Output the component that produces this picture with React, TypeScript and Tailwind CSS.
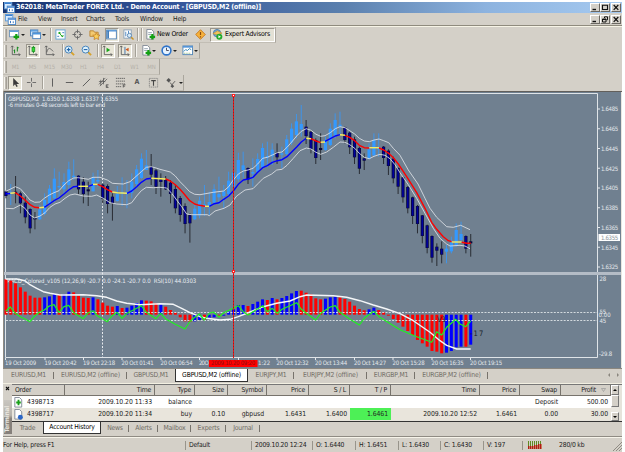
import React from "react";

type Candle = [up: number, high: number, top: number, bottom: number, low: number];
type Point = [number, number];

const UP = 1;
const DN = 0;

// Chart series are stored in thirds of a pixel, measured from the pane's top
const CANDLES: Candle[] = [
  [DN, 302, 304, 318, 325], [UP, 282, 307, 312, 345], [DN, 258, 305, 311, 340], [DN, 305, 310, 340, 370],
  [DN, 320, 338, 382, 400], [DN, 355, 357, 415, 430], [DN, 366, 384, 388, 418], [UP, 345, 358, 388, 390],
  [UP, 310, 330, 372, 376], [UP, 285, 296, 340, 345], [UP, 235, 266, 325, 335], [UP, 245, 288, 292, 330],
  [UP, 250, 276, 298, 310], [UP, 215, 238, 285, 300], [UP, 208, 257, 262, 270], [DN, 256, 257, 298, 312],
  [DN, 262, 275, 312, 340], [DN, 275, 298, 304, 348], [UP, 248, 262, 304, 304], [UP, 240, 270, 275, 290],
  [DN, 280, 284, 326, 340], [DN, 283, 288, 342, 370], [DN, 310, 320, 340, 392], [UP, 288, 312, 333, 335],
  [UP, 262, 306, 310, 348], [UP, 270, 308, 312, 355], [UP, 250, 275, 308, 325], [UP, 225, 238, 282, 295],
  [UP, 190, 206, 264, 266], [UP, 180, 226, 240, 240], [DN, 192, 230, 254, 285], [DN, 236, 241, 290, 312],
  [DN, 250, 268, 276, 320], [DN, 258, 270, 298, 300], [DN, 270, 278, 312, 340], [DN, 285, 297, 355, 370],
  [DN, 318, 324, 375, 395], [DN, 340, 348, 402, 430], [DN, 370, 375, 400, 458], [UP, 345, 356, 388, 390],
  [UP, 320, 332, 376, 385], [UP, 285, 343, 348, 378], [UP, 305, 336, 348, 375], [UP, 283, 298, 338, 340],
  [UP, 260, 312, 322, 345], [UP, 285, 304, 318, 355], [UP, 245, 272, 312, 320], [UP, 230, 248, 290, 300],
  [UP, 188, 210, 268, 275], [UP, 185, 226, 240, 265], [DN, 232, 234, 268, 282], [UP, 205, 246, 251, 290],
  [UP, 190, 207, 246, 250], [UP, 160, 174, 232, 235], [UP, 155, 198, 203, 232], [UP, 160, 179, 199, 225],
  [DN, 160, 188, 202, 222], [UP, 170, 190, 194, 235], [UP, 135, 148, 192, 195], [UP, 100, 116, 158, 165],
  [UP, 72, 94, 135, 145], [UP, 45, 102, 118, 140], [DN, 90, 110, 138, 162], [DN, 120, 125, 178, 190],
  [DN, 145, 150, 204, 222], [DN, 130, 174, 180, 210], [UP, 140, 150, 180, 182], [UP, 100, 116, 165, 168],
  [UP, 70, 90, 136, 145], [UP, 65, 104, 110, 135], [DN, 110, 112, 150, 160], [DN, 125, 128, 172, 192],
  [DN, 140, 148, 202, 222], [DN, 170, 174, 236, 252], [DN, 190, 205, 212, 240], [UP, 160, 178, 206, 208],
  [UP, 130, 150, 196, 200], [UP, 130, 172, 178, 200], [DN, 168, 170, 204, 222], [DN, 178, 182, 228, 255],
  [DN, 200, 206, 265, 280], [DN, 232, 234, 290, 312], [DN, 260, 262, 322, 338], [DN, 288, 291, 355, 370],
  [DN, 320, 322, 378, 402], [DN, 345, 348, 402, 430], [DN, 375, 376, 438, 460], [DN, 404, 406, 474, 490],
  [DN, 436, 438, 503, 518], [DN, 460, 470, 482, 528], [DN, 454, 476, 494, 520], [UP, 465, 476, 485, 520],
  [UP, 440, 458, 484, 490], [UP, 400, 420, 466, 470], [UP, 395, 432, 450, 455], [DN, 436, 438, 476, 490],
  [DN, 432, 454, 460, 500],
];

const MA: { color: string; pts: Point[] }[] = [
  { color: "#0000ff", pts: [[17, 311], [31, 311]] },
  { color: "#f5ec60", pts: [[31, 310], [46, 308]] },
  { color: "#ff0000", pts: [[46, 308], [61, 318], [75, 330], [90, 344], [104, 352], [118, 353]] },
  { color: "#f5ec60", pts: [[118, 353], [133, 352]] },
  { color: "#0000ff", pts: [[133, 352], [148, 342], [162, 332], [177, 324], [192, 312], [206, 300], [221, 290], [235, 289]] },
  { color: "#f5ec60", pts: [[235, 289], [265, 289]] },
  { color: "#0000ff", pts: [[265, 289], [279, 284]] },
  { color: "#f5ec60", pts: [[279, 283], [293, 283]] },
  { color: "#ff0000", pts: [[293, 283], [308, 290], [322, 299], [337, 306]] },
  { color: "#f5ec60", pts: [[337, 306], [352, 308], [381, 310]] },
  { color: "#0000ff", pts: [[381, 310], [395, 303], [410, 290], [424, 277], [439, 267], [454, 265]] },
  { color: "#f5ec60", pts: [[454, 265], [497, 267]] },
  { color: "#ff0000", pts: [[497, 267], [511, 273], [526, 284], [540, 298], [555, 315], [569, 332], [584, 342], [598, 346], [615, 349]] },
  { color: "#f5ec60", pts: [[615, 349], [628, 349]] },
  { color: "#0000ff", pts: [[628, 349], [643, 341], [657, 338], [671, 328], [686, 318], [700, 303], [715, 283], [730, 270], [744, 267], [759, 262], [773, 247], [788, 233], [802, 227], [817, 217], [832, 212], [846, 209], [861, 200], [875, 186], [890, 171], [904, 156], [919, 145]] },
  { color: "#f5ec60", pts: [[919, 145], [933, 146]] },
  { color: "#ff0000", pts: [[933, 146], [948, 153], [962, 158]] },
  { color: "#f5ec60", pts: [[962, 157], [975, 156]] },
  { color: "#0000ff", pts: [[975, 154], [991, 146], [1006, 138], [1020, 134]] },
  { color: "#f5ec60", pts: [[1020, 134], [1035, 136]] },
  { color: "#ff0000", pts: [[1035, 136], [1049, 142], [1064, 152], [1078, 166], [1093, 173], [1108, 174]] },
  { color: "#f5ec60", pts: [[1108, 173], [1137, 173]] },
  { color: "#ff0000", pts: [[1137, 174], [1151, 180], [1166, 190], [1180, 203], [1195, 222], [1220, 260], [1250, 308], [1275, 355], [1295, 397], [1310, 418], [1330, 440], [1345, 452], [1355, 455]] },
  { color: "#f5ec60", pts: [[1355, 456], [1385, 456]] },
  { color: "#ff0000", pts: [[1385, 457], [1400, 460], [1412, 460]] },
];

const UPPER_BAND: Point[] = [
  [17, 304], [30, 298], [46, 290], [61, 296], [75, 312], [90, 330], [104, 337], [120, 336], [133, 325], [148, 315],
  [162, 308], [177, 302], [192, 285], [206, 272], [221, 264], [235, 263], [265, 268], [279, 262], [300, 262], [322, 270],
  [337, 280], [370, 282], [390, 275], [405, 262], [424, 245], [439, 232], [454, 230], [468, 234], [480, 238], [511, 246],
  [526, 258], [540, 275], [555, 290], [569, 305], [584, 313], [600, 314], [640, 307], [671, 303], [686, 290], [700, 270],
  [715, 252], [730, 243], [744, 240], [759, 235], [773, 222], [788, 205], [802, 202], [817, 195], [832, 188], [846, 186],
  [861, 172], [875, 156], [890, 138], [904, 124], [919, 116], [933, 121], [948, 133], [962, 139], [975, 137], [991, 128],
  [1006, 116], [1020, 110], [1035, 113], [1049, 122], [1064, 132], [1078, 145], [1093, 153], [1108, 155], [1122, 150],
  [1137, 147], [1151, 152], [1166, 158], [1180, 175], [1200, 196], [1225, 240], [1254, 282], [1275, 325], [1290, 355],
  [1310, 382], [1340, 410], [1360, 412], [1382, 406], [1410, 419],
];

const LOWER_BAND: Point[] = [
  [17, 355], [40, 356], [61, 345], [75, 355], [90, 375], [104, 384], [120, 378], [135, 368], [150, 352], [165, 342],
  [180, 337], [195, 325], [210, 315], [225, 312], [250, 318], [275, 319], [290, 315], [310, 325], [330, 338], [350, 342],
  [380, 344], [395, 338], [410, 318], [424, 302], [439, 292], [460, 293], [480, 292], [500, 294], [515, 310], [530, 330],
  [545, 350], [560, 372], [575, 374], [622, 374], [628, 377], [645, 363], [672, 355], [690, 345], [710, 318], [735, 300],
  [759, 296], [775, 280], [790, 265], [815, 252], [830, 240], [846, 238], [861, 226], [880, 205], [900, 182], [919, 174],
  [933, 177], [948, 187], [962, 193], [980, 186], [1000, 172], [1020, 156], [1035, 157], [1049, 164], [1064, 175],
  [1078, 190], [1093, 202], [1108, 206], [1122, 199], [1140, 193], [1155, 196], [1170, 206], [1185, 224], [1200, 248],
  [1225, 284], [1250, 325], [1275, 370], [1300, 415], [1320, 445], [1340, 462], [1350, 468], [1380, 466], [1395, 468], [1410, 476],
];

const MACD = [
  28, 32, 40, 52, 65, 77, 83, 83, 82, 79, 72, 73, 72, 65, 67, 77, 83, 84, 82, 88, 98, 107, 110, 108, 114, 113, 107, 99, 91, 92,
  94, 99, 103, 110, 120, 128, 142, 154, 156, 154, 150, 150, 143, 142, 137, 137, 125, 118, 105, 105, 108, 102, 95, 88, 90, 84,
  88, 84, 78, 70, 63, 62, 68, 73, 85, 88, 86, 82, 80, 82, 87, 95, 107, 117, 121, 118, 113, 120, 127, 137, 147, 158, 170, 183,
  195, 210, 220, 230, 243, 245, 250, 248, 243, 232, 230, 230, 224,
];
// one letter per histogram bar
const MACD_COLORS =
  "rrrrrrrrbbbrbbrrrrbrrrrbrbbbbrrrbrrrrrrbbrbbrbbbbbrbbbrbrbbbbrrrrrbbbrrrrrrbbrrrrrrrrrrrrrrbbbbrb";

const SIGNAL: Point[] = [
  [17, 27], [50, 27], [75, 32], [90, 44], [110, 55], [130, 65], [150, 70], [180, 75], [250, 74], [290, 77], [320, 82],
  [350, 93], [380, 100], [420, 104], [480, 101], [520, 103], [545, 115], [570, 128], [600, 140], [620, 145], [660, 150],
  [690, 148], [715, 140], [750, 126], [790, 110], [830, 100], [870, 93], [900, 80], [920, 75], [1000, 77], [1040, 82],
  [1080, 92], [1120, 105], [1160, 117], [1200, 131], [1240, 152], [1290, 187], [1320, 212], [1340, 226], [1370, 237], [1412, 237],
];

const RSI: Point[] = [
  [17, 124], [31, 111], [46, 130], [61, 140], [75, 147], [90, 155], [104, 138], [118, 127], [133, 120], [148, 108],
  [162, 104], [177, 127], [192, 110], [206, 106], [221, 128], [250, 146], [265, 128], [279, 122], [293, 138], [322, 155],
  [337, 137], [351, 127], [366, 145], [381, 130], [410, 115], [424, 107], [439, 127], [468, 146], [482, 130], [497, 147],
  [526, 163], [555, 177], [569, 155], [584, 142], [598, 132], [613, 150], [628, 130], [640, 126], [657, 141], [671, 128],
  [700, 115], [715, 107], [730, 125], [744, 135], [759, 125], [788, 107], [802, 125], [817, 115], [832, 130], [846, 118],
  [875, 105], [890, 98], [904, 118], [919, 130], [947, 150], [962, 130], [991, 111], [1006, 107], [1020, 127], [1049, 147],
  [1078, 165], [1093, 145], [1108, 133], [1122, 124], [1137, 140], [1166, 158], [1200, 179], [1250, 200], [1295, 217],
  [1310, 185], [1325, 195], [1340, 172], [1367, 148], [1380, 162], [1397, 170], [1412, 153],
];

const PRICES = ["1.6485", "1.6465", "1.6445", "1.6425", "1.6405", "1.6385", "1.6365", "1.6345", "1.6325"];

// [x, label, width]; the two labels beside the red time badge are cut off by it
const TIMES: [number, string, number][] = [
  [5, "19 Oct 2009", 31], [44.5, "19 Oct 20:42", 32], [83, "19 Oct 22:18", 32], [121.5, "20 Oct 01:41", 32],
  [160.5, "20 Oct 06:54", 32], [199, "20 O", 9.5], [258, "1:22", 12], [276.5, "20 Oct 12:32", 32],
  [315, "20 Oct 13:44", 32], [354, "20 Oct 14:27", 32], [392.5, "20 Oct 15:28", 32], [431.5, "20 Oct 16:35", 32],
  [470, "20 Oct 19:15", 32],
];

const candleX = (i: number) => 5.9 + i * 4.842;
const toPath = (pts: Point[], y0: number) => pts.map(([x, y]) => `${(x / 3).toFixed(1)},${(y0 + y / 3).toFixed(1)}`).join(" ");

function Chart() {
  return (
    <svg width="619" height="277" viewBox="3 91 619 277" className="block shrink-0" fontFamily='"DejaVu Sans Condensed","DejaVu Sans",sans-serif' fontSize="6">
      <rect x="3" y="91" width="619" height="277" fill="#708090" />
      <rect x="3" y="91" width="619" height="1" fill="#625f5b" />
      <rect x="3" y="91" width="1" height="277" fill="#8f8b84" />
      <path d="M5.5 357.5V93.5H597.5V357.5Z" fill="none" stroke="#dfe4e8" />
      <rect x="4" y="272" width="617" height="3" fill="#b4bcc6" />
      <path d="M102.5 94V357" stroke="#e6eaee" strokeDasharray="2 1.5" />

      {/* Price pane */}
      {CANDLES.map(([up, high, top, bottom, low], i) => {
        const x = candleX(i);
        return (
          <g key={i}>
            <path d={`M${x} ${90 + high / 3}V${90 + low / 3}`} strokeWidth="0.8" stroke={up ? "#3399ff" : "#16161c"} />
            <rect x={x - 1.6} y={90 + top / 3} width="3.2" height={Math.max(1.4, (bottom - top) / 3)} fill={up ? "#3399ff" : "#08083c"} />
            {!up && bottom - top > 6 && (
              <rect x={x - 0.8} y={90.5 + top / 3} width="1.6" height={(bottom - top) / 3 - 1} fill="#0000a0" />
            )}
          </g>
        );
      })}
      <g fill="none" strokeLinejoin="round">
        <polyline points={toPath(UPPER_BAND, 90)} stroke="#d8dde2" strokeWidth="0.9" />
        <polyline points={toPath(LOWER_BAND, 90)} stroke="#d8dde2" strokeWidth="0.9" />
        {MA.map((s, i) => (
          <polyline key={i} points={toPath(s.pts, 90)} stroke={s.color} strokeWidth="1.4" />
        ))}
      </g>
      <g fill="#e8ecf0">
        <text x="8" y="100.8" textLength="110">GBPUSD,M2&#160; 1.6350 1.6358 1.6337 1.6355</text>
        <text x="8" y="107" textLength="97">-6 minutes 0-48 seconds left to bar end</text>
      </g>

      {/* Indicator pane */}
      <text x="6" y="282.5" textLength="190" fill="#e8ecf0">MACD_Colored_v105 (12,26,9) -20.7 0.0 -24.1 -20.7 0.0&#160; RSI(10) 44.0303</text>
      {MACD.map((v, i) => (
        <rect
          key={i}
          x={candleX(i) - 1.5}
          y={270 + Math.min(v, 134) / 3}
          width="3"
          height={Math.max(0.8, Math.abs(v - 134) / 3)}
          fill={MACD_COLORS[i] === "r" ? "#ff0000" : "#0000ff"}
        />
      ))}
      <path d="M6 312.5H597M6 320.5H597" stroke="#dfe4e8" strokeDasharray="2 1.3" strokeWidth="0.9" />
      <g fill="none" strokeLinejoin="round">
        <polyline points={toPath(SIGNAL, 270)} stroke="#f4f6f8" strokeWidth="1.4" />
        <polyline points={toPath(RSI, 270)} stroke="#20f020" strokeWidth="1.2" />
      </g>
      <g fill="#151c28" fontSize="7.5">
        <text x="437" y="322">V3</text>
        <text x="470" y="336" textLength="13">-17</text>
      </g>

      {/* Crosshair line with its handles */}
      <path d="M233.5 95V358" stroke="#a01818" />
      <path d="M233.5 95V358" stroke="#e81414" strokeDasharray="2 1" />
      {[95.5, 271.5].map((y) => (
        <g key={y}>
          <rect x="232" y={y - 1.5} width="3" height="3" fill="#ff2020" />
          <rect x="233" y={y - 0.5} width="1" height="1" fill="#fff" />
        </g>
      ))}

      {/* Scales */}
      <g fill="#e4e8ec">
        {PRICES.map((p, i) => (
          <g key={p}>
            <rect x="598" y={108.5 + i * 19.75} width="2" height="1" />
            <text x="601" y={111.3 + i * 19.75} textLength="17">{p}</text>
          </g>
        ))}
        <text x="599.5" y="280.5">28</text>
        <text x="599.5" y="313.5">55</text>
        <text x="598.5" y="316.8" textLength="12">0.00</text>
        <text x="599.5" y="322.5">45</text>
        <text x="599" y="355.5" textLength="13">-29.8</text>
        {TIMES.map(([x, label, width]) => (
          <g key={x}>
            <rect x={label === "1:22" ? 238 : x} y="358" width="1" height="2" />
            <text x={x} y="365.4" textLength={width}>{label}</text>
          </g>
        ))}
      </g>
      <rect x="598.5" y="234" width="21.5" height="7" fill="#fff" />
      <text x="601" y="239.8" textLength="17" fill="#8a929a">1.6355</text>
      <rect x="209" y="360" width="48.5" height="7" fill="#ff0000" />
      <text x="211" y="365.4" textLength="44" fill="#8c1010">2009.10.20 09:20</text>
      <rect x="621" y="92" width="1" height="276" fill="#e9e6df" />
    </svg>
  );
}

function Icon({ children }: { children: React.ReactNode }) {
  return (
    <svg width="11" height="11" viewBox="0 0 12 12" className="block shrink-0" fill="none">
      {children}
    </svg>
  );
}

const plus = <path d="M8 5.5v6M5 8.5h6" stroke="#12a012" strokeWidth="2.4" />;
const page = <path d="M2 .5h5l2.5 2.5v8H2z" fill="#fff" stroke="#7d8793" />;
const axes = <path d="M2.5 1v9.5H11M1 2.5l1.500-1.500 1.500 1.500M9.500 9l1.500 1.500-1.500 1.500" stroke="#555" strokeWidth=".9" />;

const ICONS: Record<string, React.ReactNode> = {
  app: <><rect x=".5" y=".5" width="8" height="7" fill="#d9ecff" stroke="#5f9bd8" /><rect x="3.500" y="4.500" width="8" height="7" fill="#fff" stroke="#4a86c8" /><path d="M3.500 5.500h8M1 1.500h7" stroke="#3b7fd0" strokeWidth="1.400" /><path d="M6 10V7.500M9 10V8" stroke="#2d6fc0" /></>,
  newChart: <><rect x=".5" y="1.500" width="10" height="7" fill="#fff" stroke="#6f94b8" /><path d="M1 2.500h9" stroke="#5ea0dc" strokeWidth="1.500" />{plus}</>,
  profiles: <><rect x=".5" y="1" width="8" height="6.500" fill="#cfe6fb" stroke="#4d83bd" /><rect x="3" y="4" width="8.500" height="6.500" fill="#fff" stroke="#4d83bd" /><path d="M3 5.200h8.500M1 2h7" stroke="#4a94dc" strokeWidth="1.500" /></>,
  market: <><rect x="1" y="1" width="10" height="10" fill="#fff" stroke="#62a4d4" /><path d="M3 5l2-2 2 2z" fill="#19a519" /><path d="M6 7l2 2 2-2z" fill="#19a519" /><path d="M4 4l4 4" stroke="#19a519" /><path d="M8 4h2M2.500 8h2" stroke="#3a7ac0" /></>,
  target: <><circle cx="6" cy="6" r="3.500" stroke="#666" /><path d="M6 .5v4M6 7.500v4M.5 6h4M7.500 6h4" stroke="#666" /></>,
  folder: <><path d="M1 2h4l1 1.500h4V8H1z" fill="#f3ca72" stroke="#ba8432" /><path d="M8 4l1.200 2.500 2.800.3-2 1.900.5 2.800L8 10.200 5.500 11.500 6 8.700 4 6.800l2.800-.3z" fill="#f8cf5c" stroke="#c27c22" strokeWidth=".8" /></>,
  terminal: <><rect x=".7" y="1.200" width="10.600" height="9.600" fill="#fff" stroke="#4b7fb8" /><path d="M1 2h10" stroke="#5898db" strokeWidth="1.500" /><path d="M2.300 2v8" stroke="#3675b5" strokeWidth="1.800" /></>,
  tester: <><rect x="1" y="1" width="8" height="9" fill="#fff" stroke="#8aa0b5" /><path d="M3 3v5M6 2v4" stroke="#4a86c2" /><circle cx="7" cy="7" r="2.300" fill="#d7ebfa" stroke="#5a86b0" /><path d="M9 9l2.500 2.500" stroke="#c99222" strokeWidth="1.500" /></>,
  order: <>{page}<path d="M3.500 4h4M3.500 6h3" stroke="#91a0ae" />{plus}</>,
  metaEditor: <><path d="M6 .8L11.200 6 6 11.200.8 6z" fill="#f7b23c" stroke="#c5771d" /><path d="M6 3.200v3.300M6 8v1.200" stroke="#8c4a0c" strokeWidth="1.300" /></>,
  expert: <><circle cx="5.500" cy="4.500" r="4" fill="#6fa8dc" stroke="#4b7ba6" /><path d="M1 5l5-3 5 2.500-5 2z" fill="#f2c35d" stroke="#b6852c" strokeWidth=".6" /><circle cx="8" cy="8.500" r="3.300" fill="#24ab2c" /><path d="M7 6.800v3.400l2.700-1.700z" fill="#fff" /></>,
  bars: <>{axes}<path d="M5 9V5M4 6h1M8 7V2M8 3h1.500" stroke="#168b20" strokeWidth="1.100" /></>,
  candles: <>{axes}<path d="M7 1v8" stroke="#168b20" /><rect x="5.500" y="2.500" width="3" height="4.500" fill="#35dd35" stroke="#168b20" strokeWidth=".8" /></>,
  line: <>{axes}<path d="M3 8c1-5 3.500-5 5-3l2 2" stroke="#555" strokeWidth=".9" /></>,
  zoomIn: <><path d="M7.500 7.500l3.500 3.500" stroke="#d6a22c" strokeWidth="2" /><circle cx="5" cy="5" r="3.800" fill="#dcf1fc" stroke="#3d7cb7" /><path d="M3 5h4M5 3v4" stroke="#2465a8" strokeWidth="1.200" /></>,
  zoomOut: <><path d="M7.500 7.500l3.500 3.500" stroke="#d6a22c" strokeWidth="2" /><circle cx="5" cy="5" r="3.800" fill="#dcf1fc" stroke="#3d7cb7" /><path d="M3 5h4" stroke="#2465a8" strokeWidth="1.200" /></>,
  scroll: <>{axes}<path d="M5 3v5l4-2.500z" fill="#19a519" /></>,
  shift: <>{axes}<path d="M6.500 2v8" stroke="#3d70a8" /><path d="M10.500 3v4L7 5z" fill="#d0561d" /></>,
  clock: <><circle cx="6" cy="6" r="4.800" fill="#e6f3ff" stroke="#2e74cc" strokeWidth="1.700" /><path d="M6 3v3h2.500" stroke="#445" /></>,
  template: <><rect x="1" y="1" width="10.500" height="9.500" fill="#fff" stroke="#5588b8" /><path d="M1 2h10.500" stroke="#5595d8" strokeWidth="1.800" /><path d="M2 7l2-2 2 1 2-2 2 1" stroke="#2c82b4" /><path d="M2 9h8" stroke="#77ac66" strokeDasharray="1 1" /></>,
  cursor: <path d="M3.500 1v9l2-2 1.500 3 1.500-.8L7 7.500h3z" fill="#3c3c3c" />,
  cross: <path d="M6 1v4M6 7v4M1 6h4M7 6h4" stroke="#666" />,
  vline: <path d="M6 1.500v9" stroke="#555" />,
  hline: <path d="M2 6h8" stroke="#555" />,
  trend: <path d="M2 10l8-8" stroke="#555" />,
  channel: <><path d="M1 8l7-7M2 10l8-8M3 3v6M6 1v7M1 5h7" stroke="#555" strokeWidth=".8" /><path d="M11.500 8.500H9v3h2.500M9 10h2" stroke="#444" strokeWidth=".8" /></>,
  fibo: <><path d="M1 1.500h10M1 4.500h10M1 7.500h10" stroke="#555" strokeWidth=".9" strokeDasharray="1.500 .6" /><path d="M1 10.500h6" stroke="#555" strokeWidth=".9" strokeDasharray="1.500 .6" /><path d="M11.500 8.500H9v3M9 10h2" stroke="#444" strokeWidth=".8" /></>,
  label: <><rect x="1.500" y="1.500" width="9" height="9.500" stroke="#777" strokeWidth=".8" strokeDasharray="1.500 .7" /><path d="M3.500 4h5M6 4v5.500" stroke="#444" strokeWidth="1.200" /></>,
  arrows: <><path d="M4 1l2.500 2.500L4 6 1.500 3.500z" fill="#555" /><path d="M5.500 6l2 2.500 3.500-4" stroke="#555" /><path d="M8 8l2 2-2 2-2-2z" fill="#555" /></>,
};

function Tool({ icon, pressed, w = "w-[17px]" }: { icon: string; pressed?: boolean; w?: string }) {
  return (
    <div className={`${w} flex h-[14px] shrink-0 items-center justify-center`}>
      <div
        className={
          pressed
            ? "flex h-[14px] w-[14px] items-center justify-center border border-t-[#9a968c] border-r-white border-b-white border-l-[#9a968c] bg-[#e9e6d8]"
            : "flex"
        }
      >
        <Icon>{ICONS[icon]}</Icon>
      </div>
    </div>
  );
}

function Drop() {
  return <div className="h-0 w-0 shrink-0 border-x-[2px] border-t-[2.5px] border-x-transparent border-t-[#222]" />;
}

function Sep() {
  return <div className="h-[13px] w-[2px] shrink-0 border-l border-r border-l-[#a5a198] border-r-[#f5f3ee]" />;
}

function Bar({ width, children }: { width: string; children: React.ReactNode }) {
  return (
    <div className={`${width} flex h-[16px] items-center border-r border-b border-r-[#aaa69d] border-b-[#c2beb5]`}>
      <div className="mr-[1px] ml-[1px] h-[12px] w-[3px] shrink-0 border-r border-l border-r-[#a5a198] border-l-[#f5f3ee] bg-[#bcb8b0]" />
      {children}
    </div>
  );
}

function WinButton({ kind }: { kind: "min" | "max" | "restore" | "close" }) {
  return (
    <div className="flex h-[9px] w-[10px] items-center justify-center border border-t-white border-r-[#6b6862] border-b-[#6b6862] border-l-white bg-[#d4d0c8]">
      <svg width="8" height="7" viewBox="0 0 8 7" fill="none" stroke="#111" className="shrink-0">
        {kind === "min" && <path d="M1.500 5.500h3.500" strokeWidth="1.400" />}
        {kind === "max" && <path d="M1.500 1v4.500h5V1M1 1.300h6" strokeWidth="1.100" />}
        {kind === "restore" && <path d="M3.500 2V.8h3v3H5.500M1.500 3h3.500v3H1.500zM1.500 3.500h3.500" strokeWidth="1" />}
        {kind === "close" && <path d="M1.700 1l4.600 4.800M6.300 1L1.700 5.800" strokeWidth="1.200" />}
      </svg>
    </div>
  );
}

const COLUMNS = [
  { name: "Order", w: "w-[53px]" },
  { name: "Time", w: "w-[90px]" },
  { name: "Type", w: "w-[40px]" },
  { name: "Size", w: "w-[33px]" },
  { name: "Symbol", w: "w-[39px]" },
  { name: "Price", w: "w-[42px]" },
  { name: "S / L", w: "w-[41px]" },
  { name: "T / P", w: "w-[41px]" },
  { name: "Time", w: "w-[89px]" },
  { name: "Price", w: "w-[40px]" },
  { name: "Swap", w: "w-[41px]" },
  { name: "Profit", w: "w-[50px]" },
];

const ROWS = [
  ["4398713", "2009.10.20 11:33", "balance", "", "", "", "", "", "", "", "Deposit", "500.00"],
  ["4398717", "2009.10.20 11:34", "buy", "0.10", "gbpusd", "1.6431", "1.6400", "1.6461", "2009.10.20 12:52", "1.6461", "0.00", "30.00"],
];

const CHART_TABS = [
  { name: "EURUSD,M1", w: "w-[51px]" },
  { name: "EURUSD,M2 (offline)", w: "w-[73px]" },
  { name: "GBPUSD,M1", w: "w-[48px]" },
  { name: "GBPUSD,M2 (offline)", w: "w-[73px]", active: true },
  { name: "EURJPY,M1", w: "w-[46px]" },
  { name: "EURJPY,M2 (offline)", w: "w-[73px]" },
  { name: "EURGBP,M1", w: "w-[48px]" },
  { name: "EURGBP,M2 (offline)", w: "w-[73px]" },
];

const TERMINAL_TABS = [
  { name: "Trade", w: "w-[31px]" },
  { name: "Account History", w: "w-[58px]", active: true },
  { name: "News", w: "w-[28px]" },
  { name: "Alerts", w: "w-[29px]" },
  { name: "Mailbox", w: "w-[33px]" },
  { name: "Experts", w: "w-[35px]" },
  { name: "Journal", w: "w-[34px]" },
];

const STATUS = [
  { text: "For Help, press F1", w: "w-[183px]" },
  { text: "Default", w: "w-[66px] pl-[3px]" },
  { text: "2009.10.20 12:24", w: "w-[61px] pl-[3px]" },
  { text: "O: 1.6440", w: "w-[43px] pl-[3px]" },
  { text: "H: 1.6451", w: "w-[43px] pl-[3px]" },
  { text: "L: 1.6430", w: "w-[42px] pl-[3px]" },
  { text: "C: 1.6430", w: "w-[43px] pl-[3px]" },
  { text: "V: 197", w: "w-[39px] pl-[3px]" },
];

function Tabs({ tabs }: { tabs: { name: string; w: string; active?: boolean }[] }) {
  return (
    <>
      {tabs.map((t, i) => (
        <div
          key={t.name}
          className={`${t.w} flex h-full shrink-0 items-center justify-center ${
            t.active
              ? "border-r border-b border-l border-[#333] bg-white text-black"
              : `text-[#716d66] ${tabs[i + 1]?.active ? "" : "bg-[linear-gradient(#77736c,#77736c)] bg-[length:1px_7px] bg-[position:right_center] bg-no-repeat"}`
          }`}
        >
          {t.name}
        </div>
      ))}
    </>
  );
}

export default function App() {
  return (
    <div className="h-[452px] w-[625px] overflow-hidden bg-white pt-[2px] pl-[3px] font-['DejaVu_Sans_Condensed','DejaVu_Sans',sans-serif] text-[6.8px] leading-none tracking-[-0.2px] whitespace-nowrap text-[#222]">
      <div className="flex h-[450px] w-[619px] flex-col bg-[#d4d0c8]">
        {/* Title bar */}
        <div className="flex h-[11px] shrink-0 items-center bg-[linear-gradient(90deg,#17336f_0%,#33559a_28%,#5b80ae_55%,#8db3df_78%,#a6caf0_100%)] pr-[1px] pl-[1px] text-white">
          <Icon>{ICONS.app}</Icon>
          <span className="ml-[1px] text-[7px] font-bold tracking-[-0.19px]">362018: MetaTrader FOREX Ltd. - Demo Account - [GBPUSD,M2 (offline)]</span>
          <div className="ml-auto flex">
            <WinButton kind="min" />
            <WinButton kind="max" />
            <div className="ml-[1px]"><WinButton kind="close" /></div>
          </div>
        </div>

        {/* Menu bar */}
        <div className="flex h-[13px] shrink-0 items-center border-b border-[#8f8b7e] pr-[1px] pl-[2px]">
          <Icon>{ICONS.app}</Icon>
          <div className="flex">
            <span className="ml-[2px] w-[20px]">File</span>
            <span className="w-[23px]">View</span>
            <span className="w-[25px]">Insert</span>
            <span className="w-[29px]">Charts</span>
            <span className="w-[25px]">Tools</span>
            <span className="w-[33px]">Window</span>
            <span>Help</span>
          </div>
          <div className="ml-auto flex">
            <WinButton kind="min" />
            <WinButton kind="restore" />
            <div className="ml-[1px]"><WinButton kind="close" /></div>
          </div>
        </div>

        {/* Toolbars */}
        <div className="flex h-[65px] shrink-0 flex-col border-t border-[#f7f4e6]">
          <Bar width="w-[273px]">
            <Tool icon="newChart" w="w-[13px]" />
            <Drop />
            <div className="w-[4px]" />
            <Tool icon="profiles" w="w-[13px]" />
            <Drop />
            <div className="w-[4px]" />
            <Sep />
            <Tool icon="market" />
            <Tool icon="target" />
            <Tool icon="folder" />
            <Tool icon="terminal" pressed />
            <Tool icon="tester" />
            <Sep />
            <div className="w-[2px]" />
            <Sep />
            <div className="w-[1px]" />
            <Tool icon="order" w="w-[13px]" />
            <span className="w-[34px] text-black">New Order</span>
            <Tool icon="metaEditor" w="w-[19px]" />
            <div className="flex h-[14px] flex-1 items-center gap-[2px] border border-t-[#9a968c] border-r-white border-b-white border-l-[#9a968c] bg-[#e4e1d5] pl-[1px] text-black">
              <Icon>{ICONS.expert}</Icon>
              Expert Advisors
            </div>
          </Bar>
          <Bar width="w-[197px]">
            <Tool icon="bars" w="w-[15px]" />
            <div className="w-[1px]" />
            <Tool icon="candles" pressed />
            <Tool icon="line" />
            <div className="w-[4px]" />
            <Sep />
            <Tool icon="zoomIn" w="w-[11px]" />
            <div className="w-[3px]" />
            <Tool icon="zoomOut" />
            <div className="w-[2px]" />
            <Sep />
            <Tool icon="scroll" pressed />
            <Tool icon="shift" pressed />
            <div className="w-[2px]" />
            <Sep />
            <div className="w-[3px]" />
            <Tool icon="order" w="w-[12px]" />
            <Drop />
            <div className="w-[4px]" />
            <Tool icon="clock" w="w-[13px]" />
            <Drop />
            <div className="w-[4px]" />
            <Tool icon="template" w="w-[13px]" />
            <Drop />
          </Bar>
          <Bar width="w-[157px]">
            <div className="-ml-[1px] flex text-[6px] text-[#b5b1a8]">
              {["M1", "M5", "M15", "M30", "H1", "H4", "D1", "W1", "MN"].map((p) => (
                <span key={p} className="w-[17px] text-center">{p}</span>
              ))}
            </div>
          </Bar>
          <Bar width="w-[181px]">
            <Tool icon="cursor" pressed w="w-[14px]" />
            <div className="w-[1px]" />
            <Tool icon="cross" />
            <div className="w-[2px]" />
            <Sep />
            <Tool icon="vline" />
            <Tool icon="hline" />
            <Tool icon="trend" />
            <Tool icon="channel" />
            <Tool icon="fibo" />
            <span className="w-[17px] text-center text-[7px] font-bold text-[#555]">A</span>
            <Tool icon="label" />
            <Tool icon="arrows" />
            <Drop />
          </Bar>
        </div>

        <Chart />

        {/* Chart tabs */}
        <div className="flex h-[16px] shrink-0 items-start border-t border-b border-t-[#8b877f] border-b-[#f3f0e2]">
          <div className="flex h-[13px]">
            <Tabs tabs={CHART_TABS} />
          </div>
          <div className="mt-[4px] mr-[3px] ml-auto flex gap-[7px]">
            <div className="border-y-[2px] border-r-[2.5px] border-y-transparent border-r-[#8a867e]" />
            <div className="border-y-[2px] border-l-[2.5px] border-y-transparent border-l-[#8a867e]" />
          </div>
        </div>

        {/* Terminal */}
        <div className="flex h-[53px] shrink-0 border-b border-[#8f8b83]">
          <div className="flex h-[50px] w-[9px] flex-col items-center overflow-hidden">
            <svg width="5" height="5" viewBox="0 0 5 5" className="mt-[2px] shrink-0" stroke="#111"><path d="M1 1l3 3M4 1L1 4" strokeWidth="1.100" /></svg>
            <div className="mt-[9px] flex min-h-0 w-[8px] flex-1 items-end justify-center bg-[linear-gradient(#c9c6c0_0%,#b5b2ac_45%,#85807b_55%,#85807b_100%)] pb-[1px]">
              <span className="rotate-180 text-[6.500px] font-bold text-[#e9e6df] [writing-mode:vertical-rl]">Terminal</span>
            </div>
          </div>
          <div className="flex flex-1 flex-col">
            <div className="flex h-[38px] border-t border-b border-t-[#777] border-b-[#333] bg-[#e6e3db]">
              <div className="w-[599px]">
                <div className="flex h-[11px] bg-[#d4d0c8]">
                  {COLUMNS.map((c, i) => (
                    <div key={i} className={`${c.w} flex shrink-0 items-center border-r border-b border-[#77736c] px-[3px] ${i ? "justify-end" : ""}`}>
                      {c.name}
                      {c.name === "Profit" && (
                        <svg width="5" height="4" viewBox="0 0 5 4" className="mr-[1px] ml-[5px]"><path d="M.5.5h4L2.500 3.500z" fill="none" stroke="#999" strokeWidth=".7" /></svg>
                      )}
                    </div>
                  ))}
                </div>
                {ROWS.map((row, r) => (
                  <div key={r} className={`flex h-[12px] ${r ? "bg-[#e9e5dc]" : "bg-white"}`}>
                    {row.map((cell, i) => (
                      <div
                        key={i}
                        className={`${COLUMNS[i].w} flex shrink-0 items-center tracking-[-0.05px] ${i ? "justify-end pr-[3px]" : "gap-[3px] pl-[1px]"} ${r && i === 7 ? "bg-[#4df056]" : ""}`}
                      >
                        {i === 0 && (
                          <Icon>
                            {page}
                            {r ? <circle cx="8" cy="9" r="2.700" fill="#2a66c8" /> : <path d="M6 3v6M3.500 6H8.500" stroke="#18a018" strokeWidth="2" />}
                          </Icon>
                        )}
                        {cell}
                      </div>
                    ))}
                  </div>
                ))}
              </div>
              <div className="flex w-[8px] flex-col bg-[#e9e6df]">
                <div className="flex h-[10px] items-center justify-center border border-t-white border-r-[#777] border-b-[#777] border-l-white bg-[#d4d0c8]">
                  <div className="border-x-[2px] border-b-[2.500px] border-x-transparent border-b-black" />
                </div>
                <div className="mb-auto h-[12px] border border-t-white border-r-[#777] border-b-[#777] border-l-white bg-[#d4d0c8]" />
                <div className="flex h-[9px] items-center justify-center border border-t-white border-r-[#777] border-b-[#777] border-l-white bg-[#d4d0c8]">
                  <div className="border-x-[2px] border-t-[2.500px] border-x-transparent border-t-black" />
                </div>
              </div>
            </div>
            <div className="flex h-[12px]">
              <Tabs tabs={TERMINAL_TABS} />
            </div>
          </div>
        </div>

        {/* Status bar */}
        <div className="flex flex-1 items-center border-t border-[#f7f4ea]">
          {STATUS.map((s) => (
            <div key={s.text} className={`${s.w} flex h-[9px] shrink-0 items-center border-r border-[#98948b]`}>{s.text}</div>
          ))}
          <svg width="15" height="8" viewBox="0 0 15 8" className="ml-[5px]" shapeRendering="crispEdges">
            {[5, 5, 5, 4, 4, 3, 3].map((h, i) => (
              <g key={i}>
                <rect x={i * 2} y="0" width="1" height={h} fill="#5f8a22" />
                <rect x={i * 2} y={h} width="1" height={8 - h} fill="#b01818" />
                <rect x={i * 2 + 1} y={h} width="1" height={8 - h} fill="#c87a5a" />
              </g>
            ))}
          </svg>
          <span className="ml-[16px]">280/0 kb</span>
          <svg width="9" height="9" viewBox="0 0 9 9" className="mt-[2px] ml-auto" stroke="#8f8b83"><path d="M0 9l9-9M3 9l6-6M6 9l3-3" /></svg>
        </div>
      </div>
    </div>
  );
}
